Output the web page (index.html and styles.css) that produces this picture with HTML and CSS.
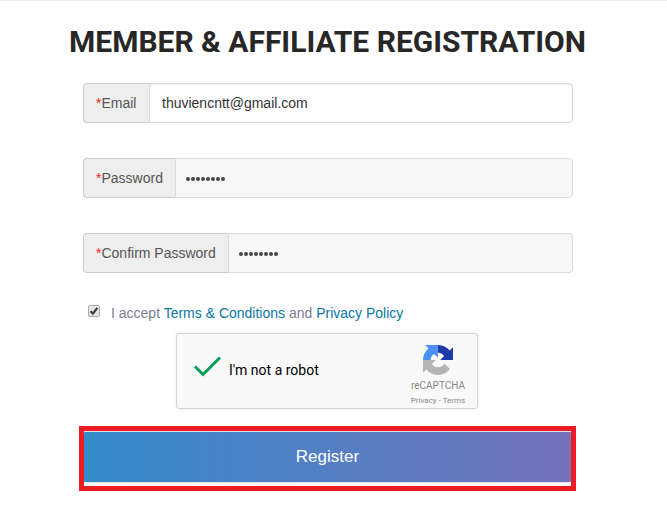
FILE: index.html
```html
<!DOCTYPE html>
<html lang="en">
<head>
<meta charset="utf-8">
<title>Member &amp; Affiliate Registration</title>
<link rel="stylesheet" href="styles.css">
</head>
<body>
<main class="page">
  <h1 class="title">MEMBER &amp; AFFILIATE REGISTRATION</h1>
  <form class="form">
    <div class="field field-email">
      <label class="field-label"><span class="required">*</span>Email</label>
      <div class="field-value">thuviencntt@gmail.com</div>
    </div>
    <div class="field field-password">
      <label class="field-label"><span class="required">*</span>Password</label>
      <div class="field-value filled"><svg class="dots" width="40" height="6" viewBox="0 0 40 6"><path d="M2 3h35.1" /></svg></div>
    </div>
    <div class="field field-confirm">
      <label class="field-label"><span class="required">*</span>Confirm Password</label>
      <div class="field-value filled"><svg class="dots" width="40" height="6" viewBox="0 0 40 6"><path d="M2 3h35.1" /></svg></div>
    </div>
    <div class="accept">
      <span class="checkbox"><svg width="10" height="10" viewBox="0 0 10 10"><path d="M1.6 5.2 4 7.6 8.3 1.8" fill="none" stroke="#3c3c3c" stroke-width="2.2"/></svg></span>
      <span class="accept-text">I accept <a>Terms &amp; Conditions</a> and <a>Privacy Policy</a></span>
    </div>
    <div class="captcha">
      <svg class="tick" width="30" height="24" viewBox="0 0 30 24"><path d="M2 11.5 10 19.5 27 2.5" fill="none" stroke="#009e55" stroke-width="3"/></svg>
      <span class="captcha-text">I'm not a robot</span>
      <div class="brand">
        <svg class="logo" width="30" height="30" viewBox="0 0 64 64">
          <path fill="#1c3aa9" d="M64 31.955l-.033-1.37V4.687l-7.16 7.16C50.948 4.674 42.033.093 32.05.093L31.9 16.3c.485 0 .86.057 1.285.216 4.976.393 9.288 3.14 11.828 7.124l-8.307 8.307z"/>
          <path fill="#4a90f5" d="M31.862.094l-1.37.033H4.594l7.16 7.16C4.58 13.147 0 22.06 0 32.046h16.26c0-.485.057-.86.163-1.135.393-4.976 3.14-9.288 7.124-11.828l8.307 8.307z"/>
          <path fill="#b5b5b5" d="M0 32.045l.034 1.37v25.898l7.16-7.16c5.86 7.173 14.774 11.754 24.76 11.754 10.4 0 19.622-4.96 25.458-12.64l-11.736-11.86a15.55 15.55 0 0 1-4.754 5.334c-2.05 1.6-4.952 2.906-8.968 2.906-.485 0-.86-.057-1.135-.163-4.976-.393-9.288-3.14-11.828-7.124l8.307-8.307z"/>
        </svg>
        <span class="brand-name">reCAPTCHA</span>
        <span class="brand-links">Privacy - Terms</span>
      </div>
    </div>
    <div class="submit-frame"><button class="submit" type="button">Register</button></div>
  </form>
</main>
</body>
</html>
```
FILE: styles.css
```css
* { box-sizing: border-box; }
body {
  margin: 0;
  background: #fff;
  font: 14px/20px "Liberation Sans", Arial, sans-serif;
  color: #555;
}
.page { height: 525px; border-top: 1px solid #ebebeb; overflow: hidden; }
.title {
  margin: 23px 0 0 69px;
  font: bold 30px/36px Roboto, sans-serif;
  color: #272727;
  white-space: nowrap;
}
.form { width: 490px; margin: 23px 0 0 83px; }
.field { display: flex; height: 40px; margin-bottom: 35px; }
.field-label {
  padding: 9px 12px;
  background: #eee;
  border: 1px solid #ccc;
  border-right: 0;
  border-radius: 4px 0 0 4px;
  white-space: nowrap;
}
.field-email .field-label { width: 66px; }
.field-password .field-label { width: 92px; }
.field-confirm .field-label { width: 145px; }
.required { color: #f22; }
.field-value {
  flex: 1;
  padding: 9px 12px;
  color: #333;
  background: #fff;
  border: 1px solid #dadada;
  border-radius: 0 4px 4px 0;
  box-shadow: inset 0 1px 2px rgba(0, 0, 0, .08);
}
.filled { padding: 9px 10px; background: #f7f7f7; box-shadow: none; }
.dots { display: block; margin-top: 8px; fill: none; stroke: #444; stroke-width: 4; stroke-linecap: round; stroke-dasharray: 0 5; }
.accept { display: flex; height: 20px; margin-top: -5px; padding-left: 5px; }
.checkbox {
  display: flex;
  width: 12px;
  height: 12px;
  margin: 2px 11px 0 0;
  border: 1px solid #aaa;
  border-radius: 2px;
  background: #e6e6e6;
}
.accept-text { color: #808094; white-space: nowrap; }
.accept-text a { color: #0878a4; }
.captcha {
  display: flex;
  width: 302px;
  height: 76px;
  margin: 10px 0 0 93px;
  background: #f9f9f9;
  border: 1px solid #d3d3d3;
  border-radius: 3px;
  box-shadow: 0 0 4px rgba(0, 0, 0, .08);
}
.tick { margin: 21px 0 0 16px; }
.captcha-text { width: 171px; margin: 26px 0 0 6px; font: 14px/20px Roboto, sans-serif; color: #000; }
.brand {
  display: flex;
  flex-direction: column;
  align-items: center;
  width: 76px;
  padding-top: 11px;
  font-family: Roboto, sans-serif;
  color: #888;
}
.brand-name { margin-top: 5px; font-size: 10px; line-height: 12px; }
.brand-links { margin-top: 4px; font-size: 8px; line-height: 10px; }
.submit-frame {
  width: 497px;
  height: 65px;
  margin: 17px 0 0 -4px;
  padding-top: 1px;
  border: 5px solid #ed1c24;
  background: #fff;
}
.submit {
  display: block;
  width: 487px;
  height: 50px;
  padding: 0;
  border: 0;
  border-radius: 1px;
  background: linear-gradient(90deg, #338bc9, #7472bd);
  box-shadow: 0 0 0 1px #e3e3ea;
  color: #fff;
  font: 17px/50px "Liberation Sans", Arial, sans-serif;
  clip-path: inset(-1px 0);
}
```
